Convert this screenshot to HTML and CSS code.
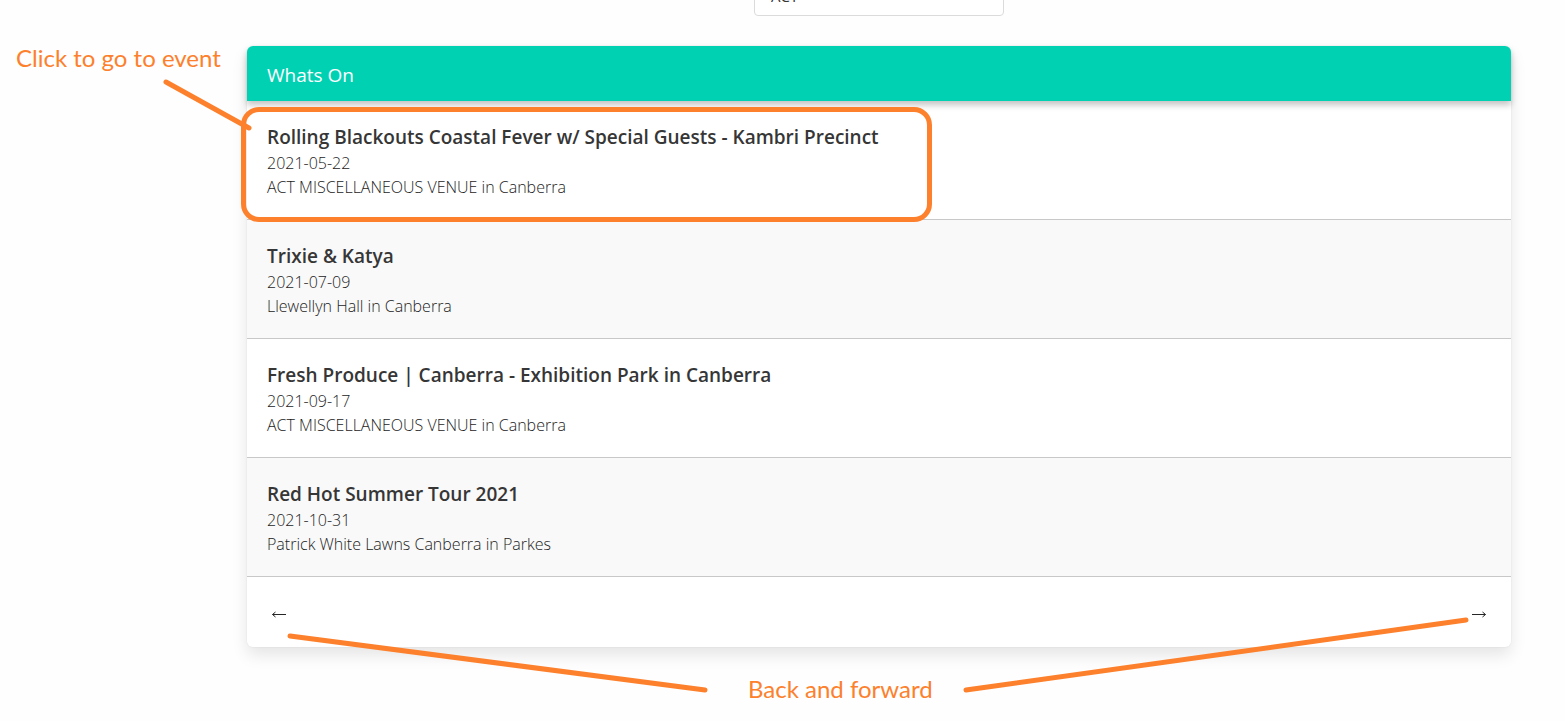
FILE: index.html
```html
<!DOCTYPE html>
<html lang="en">
<head>
<meta charset="utf-8">
<title>Whats On</title>
<link rel="stylesheet" href="styles.css">
</head>
<body>
<main class="page">
  <div class="filter">
    <select class="filter-select" aria-label="State"><option>ACT</option></select>
  </div>
  <section class="card">
    <header class="card-header"><h1 class="card-title">Whats On</h1></header>
    <a class="event" href="#e1">
      <h2 class="event-title">Rolling Blackouts Coastal Fever w/ Special Guests - Kambri Precinct</h2>
      <p class="event-text">2021-05-22</p>
      <p class="event-text">ACT MISCELLANEOUS VENUE in Canberra</p>
      <span class="highlight"></span>
    </a>
    <a class="event" href="#e2">
      <h2 class="event-title">Trixie &amp; Katya</h2>
      <p class="event-text">2021-07-09</p>
      <p class="event-text">Llewellyn Hall in Canberra</p>
    </a>
    <a class="event" href="#e3">
      <h2 class="event-title">Fresh Produce | Canberra - Exhibition Park in Canberra</h2>
      <p class="event-text">2021-09-17</p>
      <p class="event-text">ACT MISCELLANEOUS VENUE in Canberra</p>
    </a>
    <a class="event" href="#e4">
      <h2 class="event-title">Red Hot Summer Tour 2021</h2>
      <p class="event-text">2021-10-31</p>
      <p class="event-text">Patrick White Lawns Canberra in Parkes</p>
    </a>
    <nav class="pager">
      <button class="pager-button" type="button" aria-label="Back">
        <svg width="16" height="10" viewBox="0 0 16 10"><path d="M15 5.500H1.500M4.500 3L1.500 5.500L4.500 8"/></svg>
      </button>
      <button class="pager-button" type="button" aria-label="Forward">
        <svg width="16" height="10" viewBox="0 0 16 10"><path d="M1 5.500H14.500M11.500 3L14.500 5.500L11.500 8"/></svg>
      </button>
    </nav>
  </section>
  <svg class="pointer pointer-left" width="720" height="721" viewBox="0 0 720 721">
    <path d="M166 82L249 128M290 636L705 690"/>
  </svg>
  <svg class="pointer pointer-right" width="620" height="721" viewBox="945 0 620 721">
    <path d="M966 690L1466 620"/>
  </svg>
  <p class="note note-event">Click to go to event</p>
  <p class="note note-pager">Back and forward</p>
</main>
</body>
</html>
```
FILE: styles.css
```css
* { box-sizing: border-box; }

body {
  margin: 0;
  background: #fefefe;
  color: #363636;
  font-family: "Open Sans", "Noto Sans", sans-serif;
  overflow: hidden;
}

h1, h2, p { margin: 0; }

.page {
  position: relative;
  padding: 0 54px 74px 247px;
}

.filter {
  display: flex;
  justify-content: center;
  margin-top: -24px;
  margin-bottom: 30px;
}

.filter-select {
  appearance: none;
  width: 250px;
  height: 40px;
  padding: 0 16px;
  border: 1px solid #dbdbdb;
  border-radius: 4px;
  background: #fff;
  color: #363636;
  font: 400 15px/24px "Open Sans", sans-serif;
}

.card {
  border-radius: 6px;
  background: #fff;
  box-shadow: 0 8px 16px rgba(10, 10, 10, 0.1), 0 0 0 1px rgba(10, 10, 10, 0.02);
}

.card-header {
  position: relative;
  padding: 17px 20px 14px;
  border-radius: 6px 6px 0 0;
  background: #00d1b2;
  box-shadow: 0 4px 6px rgba(10, 10, 10, 0.24);
}

.card-title {
  color: #fff;
  font-size: 19px;
  font-weight: 400;
  line-height: 24px;
}

.event {
  position: relative;
  display: block;
  padding: 22px 20px 20px;
  border-bottom: 1px solid #c8c8c8;
  color: inherit;
  text-decoration: none;
}

.event:nth-of-type(even) { background: #f9f9f9; }

.event-title {
  font-size: 19px;
  font-weight: 600;
  line-height: 28px;
}

.event-text {
  color: #1c1c1c;
  font-size: 16px;
  font-weight: 300;
  line-height: 24px;
}

.highlight {
  position: absolute;
  z-index: 1;
  top: 6px;
  left: -6px;
  width: 691px;
  height: 115px;
  border: 5px solid #fd802c;
  border-radius: 18px;
}

.pager {
  display: flex;
  justify-content: space-between;
  padding: 25px 24px 21px;
}

.pager-button {
  display: flex;
  align-items: center;
  height: 24px;
  padding: 0;
  border: 0;
  background: none;
}

.pager-button path {
  fill: none;
  stroke: #262626;
  stroke-width: 1;
}

.pointer {
  position: absolute;
  z-index: 2;
  top: 24px;
  pointer-events: none;
}

.pointer-left { left: 0; }
.pointer-right { right: 0; }

.pointer path {
  fill: none;
  stroke: #fd802c;
  stroke-width: 5;
  stroke-linecap: round;
}

.note {
  position: absolute;
  color: #fd802c;
  font-family: Lato, sans-serif;
  font-size: 24px;
  line-height: 30px;
  white-space: nowrap;
}

.note-event { top: 67px; left: 16px; }
.note-pager { top: 698px; left: 748px; }
```
